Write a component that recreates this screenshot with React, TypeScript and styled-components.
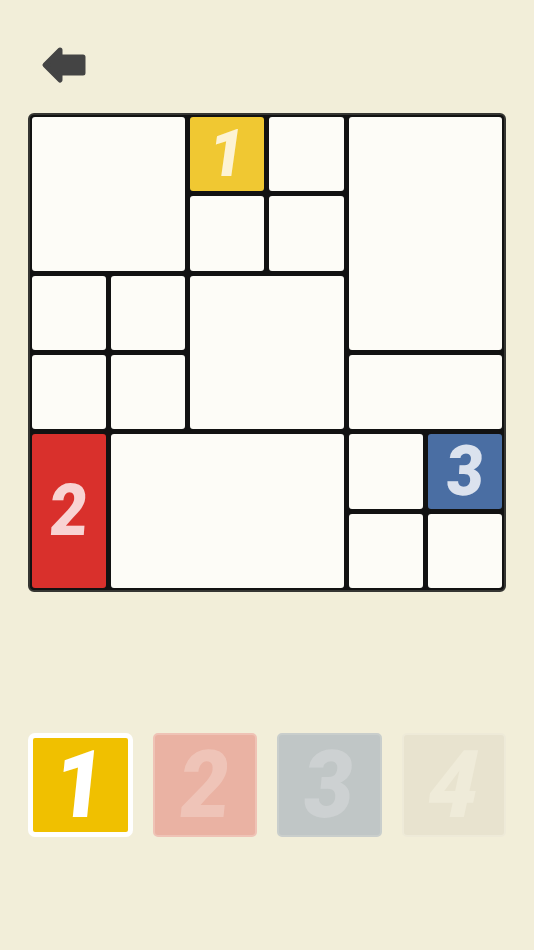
import React from "react";
import styled, { createGlobalStyle } from "styled-components";

const Global = createGlobalStyle`
  html, body { margin: 0; padding: 0; background: #f2eed9; }
  body { font-family: "Roboto", "DejaVu Sans", sans-serif; }
`;

const Page = styled.div`
  width: 534px;
  height: 950px;
  box-sizing: border-box;
  padding: 45px 28px 0 28px;
  display: flex;
  flex-direction: column;
`;

const BackButton = styled.button`
  width: 48px;
  height: 40px;
  margin-left: 13px;
  padding: 0;
  border: none;
  background: transparent;
  display: flex;
  align-items: center;
  cursor: pointer;
`;

const Board = styled.div`
  margin-top: 28px;
  width: 478px;
  height: 479px;
  box-sizing: border-box;
  border: 2px solid #353532;
  border-radius: 6px;
  background: #121212;
  display: grid;
  gap: 1px;
  grid-template-columns: repeat(6, 1fr);
  grid-template-rows: repeat(6, 1fr);
`;

type Tone = "empty" | "yellow" | "red" | "blue";

const fills: Record<Tone, string> = {
  empty: "#fdfcf7",
  yellow: "#f0c832",
  red: "#d9302c",
  blue: "#4a6ea3",
};
const inks: Record<Tone, string> = {
  empty: "transparent",
  yellow: "#fdf3d4",
  red: "#f8d3d3",
  blue: "#dbe2ee",
};

const Cell = styled.div<{ $c: string; $r: string; $tone: Tone }>`
  grid-column: ${(p) => p.$c};
  grid-row: ${(p) => p.$r};
  box-sizing: border-box;
  border: 2px solid #121212;
  border-radius: 5px;
  background: ${(p) => fills[p.$tone]};
  color: ${(p) => inks[p.$tone]};
  display: flex;
  align-items: center;
  justify-content: center;
  min-height: 0;
`;

const Digit = styled.span<{ $size: number; $slant?: number }>`
  font-family: "Roboto", "DejaVu Sans", sans-serif;
  font-weight: 900;
  font-size: ${(p) => p.$size}px;
  line-height: 0.9;
  display: inline-block;
  transform: skewX(${(p) => p.$slant ?? -6}deg) scaleX(0.92);
`;

const Palette = styled.div`
  margin-top: 141px;
  width: 478px;
  display: flex;
  gap: 20px;
`;

const swatch: Record<number, { bg: string; border: string; ink: string }> = {
  1: { bg: "#f0c000", border: "#ffffff", ink: "#ffffff" },
  2: { bg: "#eab2a3", border: "#efc3b6", ink: "#efc4b8" },
  3: { bg: "#c0c6c6", border: "#c9cecc", ink: "#cdd1d2" },
  4: { bg: "#e8e3cf", border: "#eeead8", ink: "#efebd9" },
};

const Swatch = styled.button<{ $n: number; $selected: boolean }>`
  width: 104.5px;
  height: 104px;
  box-sizing: border-box;
  padding: 0;
  border: ${(p) => (p.$selected ? "5px" : "2px")} solid ${(p) => swatch[p.$n].border};
  border-radius: ${(p) => (p.$selected ? "7px" : "5px")};
  background: ${(p) => swatch[p.$n].bg};
  color: ${(p) => swatch[p.$n].ink};
  display: flex;
  align-items: center;
  justify-content: center;
  cursor: pointer;
`;

const cells: { c: string; r: string; tone: Tone; n?: string; size?: number; slant?: number }[] = [
  { c: "1 / 3", r: "1 / 3", tone: "empty" },
  { c: "3 / 4", r: "1 / 2", tone: "yellow", n: "1", size: 66, slant: -8 },
  { c: "4 / 5", r: "1 / 2", tone: "empty" },
  { c: "5 / 7", r: "1 / 4", tone: "empty" },
  { c: "3 / 4", r: "2 / 3", tone: "empty" },
  { c: "4 / 5", r: "2 / 3", tone: "empty" },
  { c: "1 / 2", r: "3 / 4", tone: "empty" },
  { c: "2 / 3", r: "3 / 4", tone: "empty" },
  { c: "3 / 5", r: "3 / 5", tone: "empty" },
  { c: "1 / 2", r: "4 / 5", tone: "empty" },
  { c: "2 / 3", r: "4 / 5", tone: "empty" },
  { c: "5 / 7", r: "4 / 5", tone: "empty" },
  { c: "1 / 2", r: "5 / 7", tone: "red", n: "2", size: 72, slant: -4 },
  { c: "2 / 5", r: "5 / 7", tone: "empty" },
  { c: "5 / 6", r: "5 / 6", tone: "empty" },
  { c: "6 / 7", r: "5 / 6", tone: "blue", n: "3", size: 70, slant: -4 },
  { c: "5 / 6", r: "6 / 7", tone: "empty" },
  { c: "6 / 7", r: "6 / 7", tone: "empty" },
];

const BackArrow = () => (
  <svg width="46" height="38" viewBox="0 0 46 38">
    <path
      d="M19 4 L4 19 L19 34 L19 27 L42 27 L42 11 L19 11 Z"
      fill="#444444"
      stroke="#444444"
      strokeWidth="5"
      strokeLinejoin="round"
    />
  </svg>
);

export default function App() {
  return (
    <>
      <Global />
      <Page>
        <BackButton aria-label="Back">
          <BackArrow />
        </BackButton>
        <Board>
          {cells.map((cell, i) => (
            <Cell key={i} $c={cell.c} $r={cell.r} $tone={cell.tone}>
              {cell.n && (
                <Digit $size={cell.size ?? 70} $slant={cell.slant}>
                  {cell.n}
                </Digit>
              )}
            </Cell>
          ))}
        </Board>
        <Palette>
          {[1, 2, 3, 4].map((n) => (
            <Swatch key={n} $n={n} $selected={n === 1}>
              <Digit $size={94} $slant={n === 4 ? -12 : -6}>
                {n}
              </Digit>
            </Swatch>
          ))}
        </Palette>
      </Page>
    </>
  );
}
